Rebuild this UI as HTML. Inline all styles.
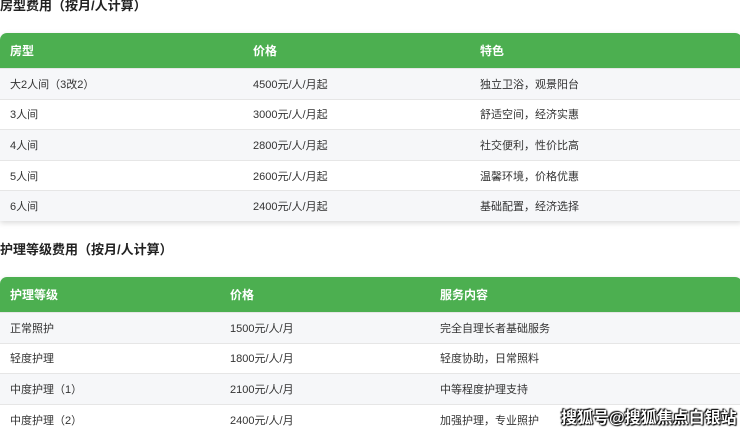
<!DOCTYPE html>
<html><head><meta charset="utf-8"><style>
body{margin:0;width:740px;height:430px;overflow:hidden;background:#fff;font-family:"Liberation Sans","Noto Sans CJK SC",sans-serif;color:#333;position:relative}
h3{position:absolute;left:0;margin:0;font-size:13px;font-weight:bold;color:#222}
table{position:absolute;left:0;width:742px;border-collapse:collapse;border-radius:7px 7px 0 0;overflow:hidden;box-shadow:0 2px 6px rgba(0,0,0,.15);font-size:11px}
th{background:#4CAF50;color:#fff;text-align:left;font-weight:bold;font-size:12px;height:35px;padding:0 0 0 10px}
td{height:29.6px;padding:0 0 0 10px;border-top:1px solid #e6e6e6}
tr:nth-child(even) td{background:#f6f7f9}
.wm{position:absolute;left:561px;top:404px;font-size:16px;font-weight:bold;color:#fff;text-shadow:0 0 2px #000,0 0 1px #000,1px 1px 1px #000,-1px -1px 1px #000;letter-spacing:0px}
</style></head><body>
<h3 style="top:-5px">房型费用（按月/人计算）</h3>
<table style="top:33px">
<tr><th style="width:233px">房型</th><th style="width:217px">价格</th><th>特色</th></tr>
<tr><td>大2人间（3改2）</td><td>4500元/人/月起</td><td>独立卫浴，观景阳台</td></tr>
<tr><td>3人间</td><td>3000元/人/月起</td><td>舒适空间，经济实惠</td></tr>
<tr><td>4人间</td><td>2800元/人/月起</td><td>社交便利，性价比高</td></tr>
<tr><td>5人间</td><td>2600元/人/月起</td><td>温馨环境，价格优惠</td></tr>
<tr><td>6人间</td><td>2400元/人/月起</td><td>基础配置，经济选择</td></tr>
</table>
<h3 style="top:239px">护理等级费用（按月/人计算）</h3>
<table style="top:277px">
<tr><th style="width:210px">护理等级</th><th style="width:200px">价格</th><th>服务内容</th></tr>
<tr><td>正常照护</td><td>1500元/人/月</td><td>完全自理长者基础服务</td></tr>
<tr><td>轻度护理</td><td>1800元/人/月</td><td>轻度协助，日常照料</td></tr>
<tr><td>中度护理（1）</td><td>2100元/人/月</td><td>中等程度护理支持</td></tr>
<tr><td>中度护理（2）</td><td>2400元/人/月</td><td>加强护理，专业照护</td></tr>
</table>
<div class="wm">搜狐号@搜狐焦点白银站</div>
</body></html>
